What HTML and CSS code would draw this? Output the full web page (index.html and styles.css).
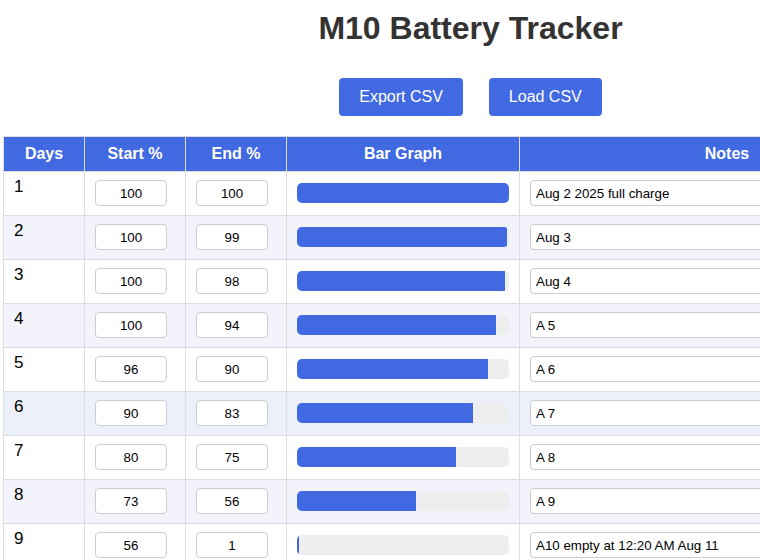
FILE: index.html
```html
<!DOCTYPE html>
<html lang="en">
<head>
<meta charset="utf-8">
<title>M10 Battery Tracker</title>
<link rel="stylesheet" href="styles.css">
</head>
<body>
<div class="page">
  <h1 class="title">M10 Battery Tracker</h1>
  <div class="actions">
    <button class="btn">Export CSV</button>
    <button class="btn">Load CSV</button>
  </div>
  <table class="tracker">
    <thead>
      <tr>
        <th class="c-day">Days</th>
        <th class="c-num">Start %</th>
        <th class="c-num">End %</th>
        <th class="c-bar">Bar Graph</th>
        <th class="c-notes">Notes</th>
      </tr>
    </thead>
    <tbody>
      <tr><td class="day">1</td><td><input class="num" value="100"></td><td><input class="num" value="100"></td><td><div class="bar"><div class="fill" style="width:100%"></div></div></td><td><input class="note" value="Aug 2 2025 full charge"></td></tr>
      <tr><td class="day">2</td><td><input class="num" value="100"></td><td><input class="num" value="99"></td><td><div class="bar"><div class="fill" style="width:99%"></div></div></td><td><input class="note" value="Aug 3"></td></tr>
      <tr><td class="day">3</td><td><input class="num" value="100"></td><td><input class="num" value="98"></td><td><div class="bar"><div class="fill" style="width:98%"></div></div></td><td><input class="note" value="Aug 4"></td></tr>
      <tr><td class="day">4</td><td><input class="num" value="100"></td><td><input class="num" value="94"></td><td><div class="bar"><div class="fill" style="width:94%"></div></div></td><td><input class="note" value="A 5"></td></tr>
      <tr><td class="day">5</td><td><input class="num" value="96"></td><td><input class="num" value="90"></td><td><div class="bar"><div class="fill" style="width:90%"></div></div></td><td><input class="note" value="A 6"></td></tr>
      <tr class="hover"><td class="day">6</td><td><input class="num" value="90"></td><td><input class="num" value="83"></td><td><div class="bar"><div class="fill" style="width:83%"></div></div></td><td><input class="note" value="A 7"></td></tr>
      <tr><td class="day">7</td><td><input class="num" value="80"></td><td><input class="num" value="75"></td><td><div class="bar"><div class="fill" style="width:75%"></div></div></td><td><input class="note" value="A 8"></td></tr>
      <tr><td class="day">8</td><td><input class="num" value="73"></td><td><input class="num" value="56"></td><td><div class="bar"><div class="fill" style="width:56%"></div></div></td><td><input class="note" value="A 9"></td></tr>
      <tr><td class="day">9</td><td><input class="num" value="56"></td><td><input class="num" value="1"></td><td><div class="bar"><div class="fill" style="width:1%"></div></div></td><td><input class="note" value="A10 empty at 12:20 AM Aug 11"></td></tr>
    </tbody>
  </table>
</div>
</body>
</html>
```
FILE: styles.css
```css
html {
  overflow: hidden;
}
body {
  margin: 0;
  background: #fff;
  font-family: "Liberation Sans", Arial, sans-serif;
  color: #000;
}
.page {
  width: 935px;
  margin-left: 3px;
}
.title {
  margin: 10px 0 0;
  font-size: 32px;
  line-height: 37px;
  font-weight: bold;
  color: #333;
  text-align: center;
}
.actions {
  display: flex;
  justify-content: center;
  gap: 26px;
  margin: 31px 0 20px;
}
.btn {
  font-family: "Liberation Sans", Arial, sans-serif;
  font-size: 16px;
  line-height: 18px;
  padding: 10px 20px;
  color: #fff;
  background: #4169e1;
  border: none;
  border-radius: 4px;
}
.tracker {
  width: 932px;
  border-collapse: collapse;
  table-layout: fixed;
}
.tracker th {
  background: #4169e1;
  color: #fff;
  font-size: 16px;
  font-weight: bold;
  line-height: 18px;
  padding: 8px 10px;
  border: 1px solid #ddd;
  text-align: center;
}
.c-day { width: 60px; }
.c-num { width: 80px; }
.c-bar { width: 212px; }
.tracker td {
  border: 1px solid #ddd;
  padding: 8px 10px 9px;
  font-size: 16px;
  line-height: 18px;
  vertical-align: middle;
}
.tracker td.day {
  vertical-align: top;
  padding-top: 6px;
  font-size: 17px;
}
.tracker tbody tr:nth-child(even) {
  background: #f3f3fb;
}
.tracker tbody tr.hover {
  background: #ebf0fb;
}
.num, .note {
  box-sizing: border-box;
  height: 26px;
  font-family: "Liberation Sans", Arial, sans-serif;
  font-size: 13.33px;
  color: #000;
  border: 1px solid #ccc;
  border-radius: 4px;
  background: #fff;
  vertical-align: middle;
}
.num {
  width: 72px;
  text-align: center;
  padding: 0 4px;
}
.note {
  width: 100%;
  padding: 0 5px;
}
.bar {
  height: 20px;
  background: #eee;
  border-radius: 5px;
  overflow: hidden;
}
.fill {
  height: 100%;
  background: #4169e1;
}
```
